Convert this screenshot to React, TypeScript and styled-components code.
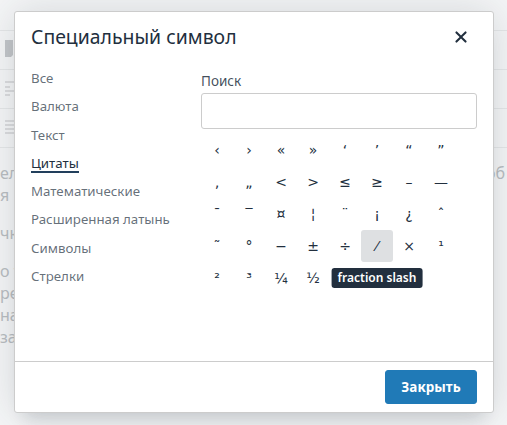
import styled, { createGlobalStyle } from 'styled-components';

const GlobalStyle = createGlobalStyle`
  html, body {
    margin: 0;
    padding: 0;
    background: #f5f6f7;
    font-family: "Noto Sans", "Open Sans", sans-serif;
  }
`;

const categories = [
  'Все',
  'Валюта',
  'Текст',
  'Цитаты',
  'Математические',
  'Расширенная латынь',
  'Символы',
  'Стрелки',
];

const chars: [number, string][] = [
  [8249, 'single left-pointing angle quotation mark'],
  [8250, 'single right-pointing angle quotation mark'],
  [171, 'left pointing guillemet'],
  [187, 'right pointing guillemet'],
  [8216, 'left single quotation mark'],
  [8217, 'right single quotation mark'],
  [8220, 'left double quotation mark'],
  [8221, 'right double quotation mark'],
  [8218, 'single low-9 quotation mark'],
  [8222, 'double low-9 quotation mark'],
  [60, 'less-than sign'],
  [62, 'greater-than sign'],
  [8804, 'less-than or equal to'],
  [8805, 'greater-than or equal to'],
  [8211, 'en dash'],
  [8212, 'em dash'],
  [175, 'macron'],
  [8254, 'overline'],
  [164, 'currency sign'],
  [166, 'broken bar'],
  [168, 'diaeresis'],
  [161, 'inverted exclamation mark'],
  [191, 'turned question mark'],
  [710, 'circumflex accent'],
  [732, 'small tilde'],
  [176, 'degree sign'],
  [8722, 'minus sign'],
  [177, 'plus-minus sign'],
  [247, 'division sign'],
  [8260, 'fraction slash'],
  [215, 'multiplication sign'],
  [185, 'superscript one'],
  [178, 'superscript two'],
  [179, 'superscript three'],
  [188, 'fraction one quarter'],
  [189, 'fraction one half'],
  [190, 'fraction three quarters'],
];

const HOVERED = 8260;

function App() {
  return (
    <>
      <GlobalStyle />
      <StyledPage>
        <StyledToolbarRow>
          <svg width="10" height="20" viewBox="0 0 10 20">
            <path d="M0 0h8v15l-2 2H0z" fill="#c3c6c9" />
          </svg>
        </StyledToolbarRow>
        <StyledToolbarRow>
          <svg width="12" height="16" viewBox="0 0 12 16">
            <path d="M0 1h9M0 6h5M0 10h9M0 14h5" stroke="#d2d4d6" strokeWidth="1.6" />
          </svg>
        </StyledToolbarRow>
        <StyledToolbarRow>
          <svg width="12" height="16" viewBox="0 0 12 16">
            <path d="M0 1h10M0 5h10M0 9h10M0 13h10" stroke="#d2d4d6" strokeWidth="1.6" />
          </svg>
        </StyledToolbarRow>
        <StyledText>
          <StyledParagraph>
            <StyledLine>
              <span>ел</span>
              <span>об</span>
            </StyledLine>
            <StyledLine>я и</StyledLine>
          </StyledParagraph>
          <StyledParagraph>
            <StyledLine>чк</StyledLine>
          </StyledParagraph>
          <StyledParagraph>
            <StyledLine>о т</StyledLine>
            <StyledLine>ре,</StyledLine>
            <StyledLine>на;</StyledLine>
            <StyledLine>за</StyledLine>
          </StyledParagraph>
        </StyledText>

        <StyledOverlay>
          <StyledDialog>
            <StyledHeader>
              <StyledTitle>Специальный символ</StyledTitle>
              <StyledCloseButton aria-label="Закрыть">
                <svg width="24" height="24" viewBox="0 0 24 24">
                  <path
                    d="M17.3 8.2L13.4 12l3.9 3.8a1 1 0 01-1.5 1.5L12 13.4l-3.8 3.9a1 1 0 01-1.5-1.5l3.9-3.8-3.9-3.8a1 1 0 011.5-1.5l3.8 3.9 3.8-3.9a1 1 0 011.5 1.5z"
                    fill="#222f3e"
                  />
                </svg>
              </StyledCloseButton>
            </StyledHeader>
            <StyledBody>
              <StyledNav>
                {categories.map((name) => (
                  <StyledNavItem key={name} $active={name === 'Цитаты'}>
                    {name}
                  </StyledNavItem>
                ))}
              </StyledNav>
              <StyledMain>
                <StyledLabel>Поиск</StyledLabel>
                <StyledInput type="text" />
                <StyledGrid>
                  {chars.map(([code, title]) => (
                    <StyledCell key={code} $hovered={code === HOVERED}>
                      <StyledGlyph>{String.fromCharCode(code)}</StyledGlyph>
                      {code === HOVERED && <StyledTooltip>{title}</StyledTooltip>}
                    </StyledCell>
                  ))}
                </StyledGrid>
              </StyledMain>
            </StyledBody>
            <StyledFooter>
              <StyledPrimaryButton>Закрыть</StyledPrimaryButton>
            </StyledFooter>
          </StyledDialog>
        </StyledOverlay>
      </StyledPage>
    </>
  );
}

const StyledPage = styled.div`
  position: relative;
  width: 507px;
  height: 425px;
  overflow: hidden;
  padding-top: 30px;
  box-sizing: border-box;
`;

const StyledToolbarRow = styled.div`
  height: 38px;
  border-top: 1px solid #e5e7e8;
  display: flex;
  align-items: center;
  padding-left: 5px;
`;

const StyledText = styled.div`
  border-top: 1px solid #e5e7e8;
  padding-top: 14px;
  font-size: 16px;
  line-height: 22px;
  color: #b9bdc1;
  display: flex;
  flex-direction: column;
  gap: 16px;
`;

const StyledParagraph = styled.div``;

const StyledLine = styled.div`
  display: flex;
  justify-content: space-between;
  padding-right: 2px;
`;

const StyledOverlay = styled.div`
  position: absolute;
  inset: 0;
  padding: 11px 0 0 14px;
`;

const StyledDialog = styled.div`
  width: 480px;
  height: 402px;
  box-sizing: border-box;
  background: #fff;
  border: 1px solid #ccc;
  border-radius: 3px;
  box-shadow: 0 16px 16px -10px rgba(34, 47, 62, 0.15), 0 0 40px 1px rgba(34, 47, 62, 0.15);
  display: flex;
  flex-direction: column;
  color: #222f3e;
`;

const StyledHeader = styled.div`
  display: flex;
  align-items: center;
  justify-content: space-between;
  height: 34px;
  padding: 8px 16px 0 16px;
`;

const StyledTitle = styled.h1`
  margin: 0;
  font-size: 19.4px;
  font-weight: 400;
  line-height: 1.3;
`;

const StyledCloseButton = styled.button`
  width: 32px;
  height: 34px;
  padding: 0;
  border: 0;
  background: transparent;
  display: flex;
  align-items: center;
  justify-content: center;
`;

const StyledBody = styled.div`
  flex: 1;
  display: flex;
  gap: 16px;
  padding: 14px 16px 0 16px;
`;

const StyledNav = styled.div`
  width: 154px;
  display: flex;
  flex-direction: column;
  align-items: flex-start;
  gap: 8px;
`;

const StyledNavItem = styled.div<{ $active?: boolean }>`
  font-size: 13.3px;
  line-height: 20.3px;
  box-sizing: border-box;
  height: 20.3px;
  color: ${({ $active }) => ($active ? '#222f3e' : 'rgba(34, 47, 62, 0.7)')};
  border-bottom: 2px solid ${({ $active }) => ($active ? '#223f5c' : 'transparent')};
`;

const StyledMain = styled.div`
  flex: 1;
  display: flex;
  flex-direction: column;
  padding-top: 4px;
`;

const StyledLabel = styled.label`
  font-size: 13.5px;
  line-height: 18px;
  color: rgba(34, 47, 62, 0.85);
  margin-bottom: 3px;
`;

const StyledInput = styled.input`
  box-sizing: border-box;
  width: 100%;
  height: 36px;
  border: 1px solid #ccc;
  border-radius: 3px;
  outline: none;
  font: inherit;
`;

const StyledGrid = styled.div`
  margin-top: 5px;
  display: grid;
  grid-template-columns: repeat(8, 32px);
  grid-auto-rows: 32px;
`;

const StyledCell = styled.div<{ $hovered?: boolean }>`
  position: relative;
  display: flex;
  align-items: center;
  justify-content: center;
  border-radius: 3px;
  background: ${({ $hovered }) => ($hovered ? '#dee0e2' : 'transparent')};
`;

const StyledGlyph = styled.span`
  font-family: "DejaVu Sans", "Noto Sans", sans-serif;
  font-size: 14px;
  color: #222f3e;
`;

const StyledTooltip = styled.div`
  position: absolute;
  top: calc(100% + 6px);
  left: 50%;
  transform: translateX(-50%);
  white-space: nowrap;
  background: #222f3e;
  color: #fff;
  font-size: 12px;
  font-weight: 600;
  line-height: 20px;
  padding: 0 6px;
  border-radius: 3px;
  z-index: 2;
`;

const StyledFooter = styled.div`
  display: flex;
  justify-content: flex-end;
  border-top: 1px solid #ccc;
  padding: 8px 16px;
`;

const StyledPrimaryButton = styled.button`
  width: 92px;
  height: 34px;
  padding: 0;
  background: #207ab7;
  border: 1px solid #207ab7;
  border-radius: 3px;
  color: #fff;
  font-family: inherit;
  font-size: 13.5px;
  font-weight: 700;
`;

export default App;
